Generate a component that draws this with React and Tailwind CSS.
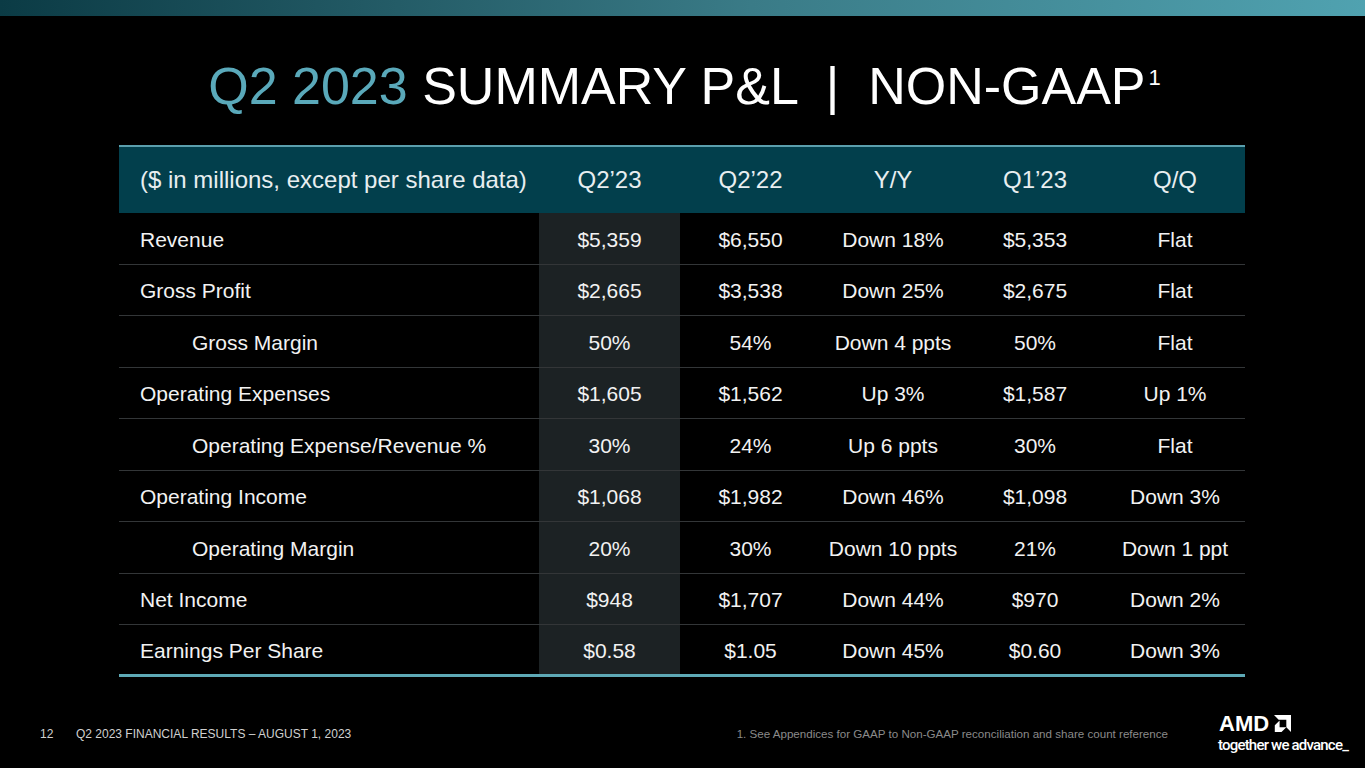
import React from 'react';

const rows = [
  { label: 'Revenue', q223: '$5,359', q222: '$6,550', yy: 'Down 18%', q123: '$5,353', qq: 'Flat' },
  { label: 'Gross Profit', q223: '$2,665', q222: '$3,538', yy: 'Down 25%', q123: '$2,675', qq: 'Flat' },
  { label: 'Gross Margin', indent: true, q223: '50%', q222: '54%', yy: 'Down 4 ppts', q123: '50%', qq: 'Flat' },
  { label: 'Operating Expenses', q223: '$1,605', q222: '$1,562', yy: 'Up 3%', q123: '$1,587', qq: 'Up 1%' },
  { label: 'Operating Expense/Revenue %', indent: true, q223: '30%', q222: '24%', yy: 'Up 6 ppts', q123: '30%', qq: 'Flat' },
  { label: 'Operating Income', q223: '$1,068', q222: '$1,982', yy: 'Down 46%', q123: '$1,098', qq: 'Down 3%' },
  { label: 'Operating Margin', indent: true, q223: '20%', q222: '30%', yy: 'Down 10 ppts', q123: '21%', qq: 'Down 1 ppt' },
  { label: 'Net Income', q223: '$948', q222: '$1,707', yy: 'Down 44%', q123: '$970', qq: 'Down 2%' },
  { label: 'Earnings Per Share', q223: '$0.58', q222: '$1.05', yy: 'Down 45%', q123: '$0.60', qq: 'Down 3%' },
];

function AmdLogo() {
  return (
    <div className="flex flex-col items-start">
      <div className="flex items-center gap-[5px] h-[18px] pl-[1px]">
        <span className="text-[22px] leading-none font-bold text-white" style={{ fontFamily: '"Liberation Sans", Arial, sans-serif' }}>AMD</span>
        <svg width="17" height="17" viewBox="0 0 5.676 5.677" className="fill-white">
          <polygon points="0,0 1.559,1.56 4.115,1.56 4.115,4.117 5.676,5.677 5.676,0" />
          <polygon points="1.869,1.824 0.265,3.427 0.265,5.677 2.511,5.677 4.115,4.07 1.869,4.07" />
        </svg>
      </div>
      <span className="mt-[5px] text-[15px] leading-none font-medium text-white tracking-[-0.8px] whitespace-nowrap" style={{ fontFamily: 'Roboto, sans-serif' }}>together we advance_</span>
    </div>
  );
}

export default function App() {
  return (
    <div className="w-[1365px] h-[768px] bg-black overflow-hidden flex flex-col" style={{ fontFamily: '"Liberation Sans", Arial, sans-serif' }}>
      <div className="h-[16px] shrink-0 w-full bg-gradient-to-r from-[#0b3b45] via-[#3a7b87] via-55% to-[#50a2b0]" />

      <h1 className="mt-[44px] shrink-0 pl-[4px] text-center text-[52px] leading-none text-white whitespace-pre">
        <span className="text-[#5aa9ba]">Q2 2023</span> SUMMARY P&amp;L  |  NON-GAAP<sup className="text-[22px] relative -top-[19px] ml-[3px]">1</sup>
      </h1>

      <div className="mt-[33px] shrink-0 ml-[119px] w-[1126px]">
        <div className="flex h-[68px] items-center bg-[#023f4c] border-t-[2px] border-[#5b9fad] text-[24px] text-[#e8eef0]">
          <div className="w-[420px] pl-[21px]">($ in millions, except per share data)</div>
          <div className="w-[141px] text-center">Q2’23</div>
          <div className="w-[141px] text-center">Q2’22</div>
          <div className="w-[144px] text-center">Y/Y</div>
          <div className="w-[140px] text-center">Q1’23</div>
          <div className="w-[140px] text-center">Q/Q</div>
        </div>
        {rows.map((r, i) => (
          <div
            key={r.label}
            className={`flex h-[51.5px] text-[21px] text-[#f2f2f2] ${i === rows.length - 1 ? 'border-b-[3px] border-[#5ea9b6]' : 'border-b border-[#333638]'}`}
          >
            <div className={`w-[420px] flex items-center pt-[2px] ${r.indent ? 'pl-[73px]' : 'pl-[21px]'}`}>{r.label}</div>
            <div className="w-[141px] flex items-center justify-center pt-[2px] bg-[#1c2224]">{r.q223}</div>
            <div className="w-[141px] flex items-center justify-center pt-[2px]">{r.q222}</div>
            <div className="w-[144px] flex items-center justify-center pt-[2px]">{r.yy}</div>
            <div className="w-[140px] flex items-center justify-center pt-[2px]">{r.q123}</div>
            <div className="w-[140px] flex items-center justify-center pt-[2px]">{r.qq}</div>
          </div>
        ))}
      </div>

      <div className="mt-[38px] shrink-0 flex items-center pl-[40px]">
        <span className="w-[36px] text-[12px] text-[#d0d0d0]">12</span>
        <span className="text-[12px] text-[#d0d0d0]">Q2 2023 FINANCIAL RESULTS – AUGUST 1, 2023</span>
        <span className="ml-auto text-[11.6px] text-[#8a8a8a]">1.  See Appendices for GAAP to Non-GAAP reconciliation and share count reference</span>
        <div className="ml-[50px] mr-[17px] w-[130px]">
          <AmdLogo />
        </div>
      </div>
    </div>
  );
}
